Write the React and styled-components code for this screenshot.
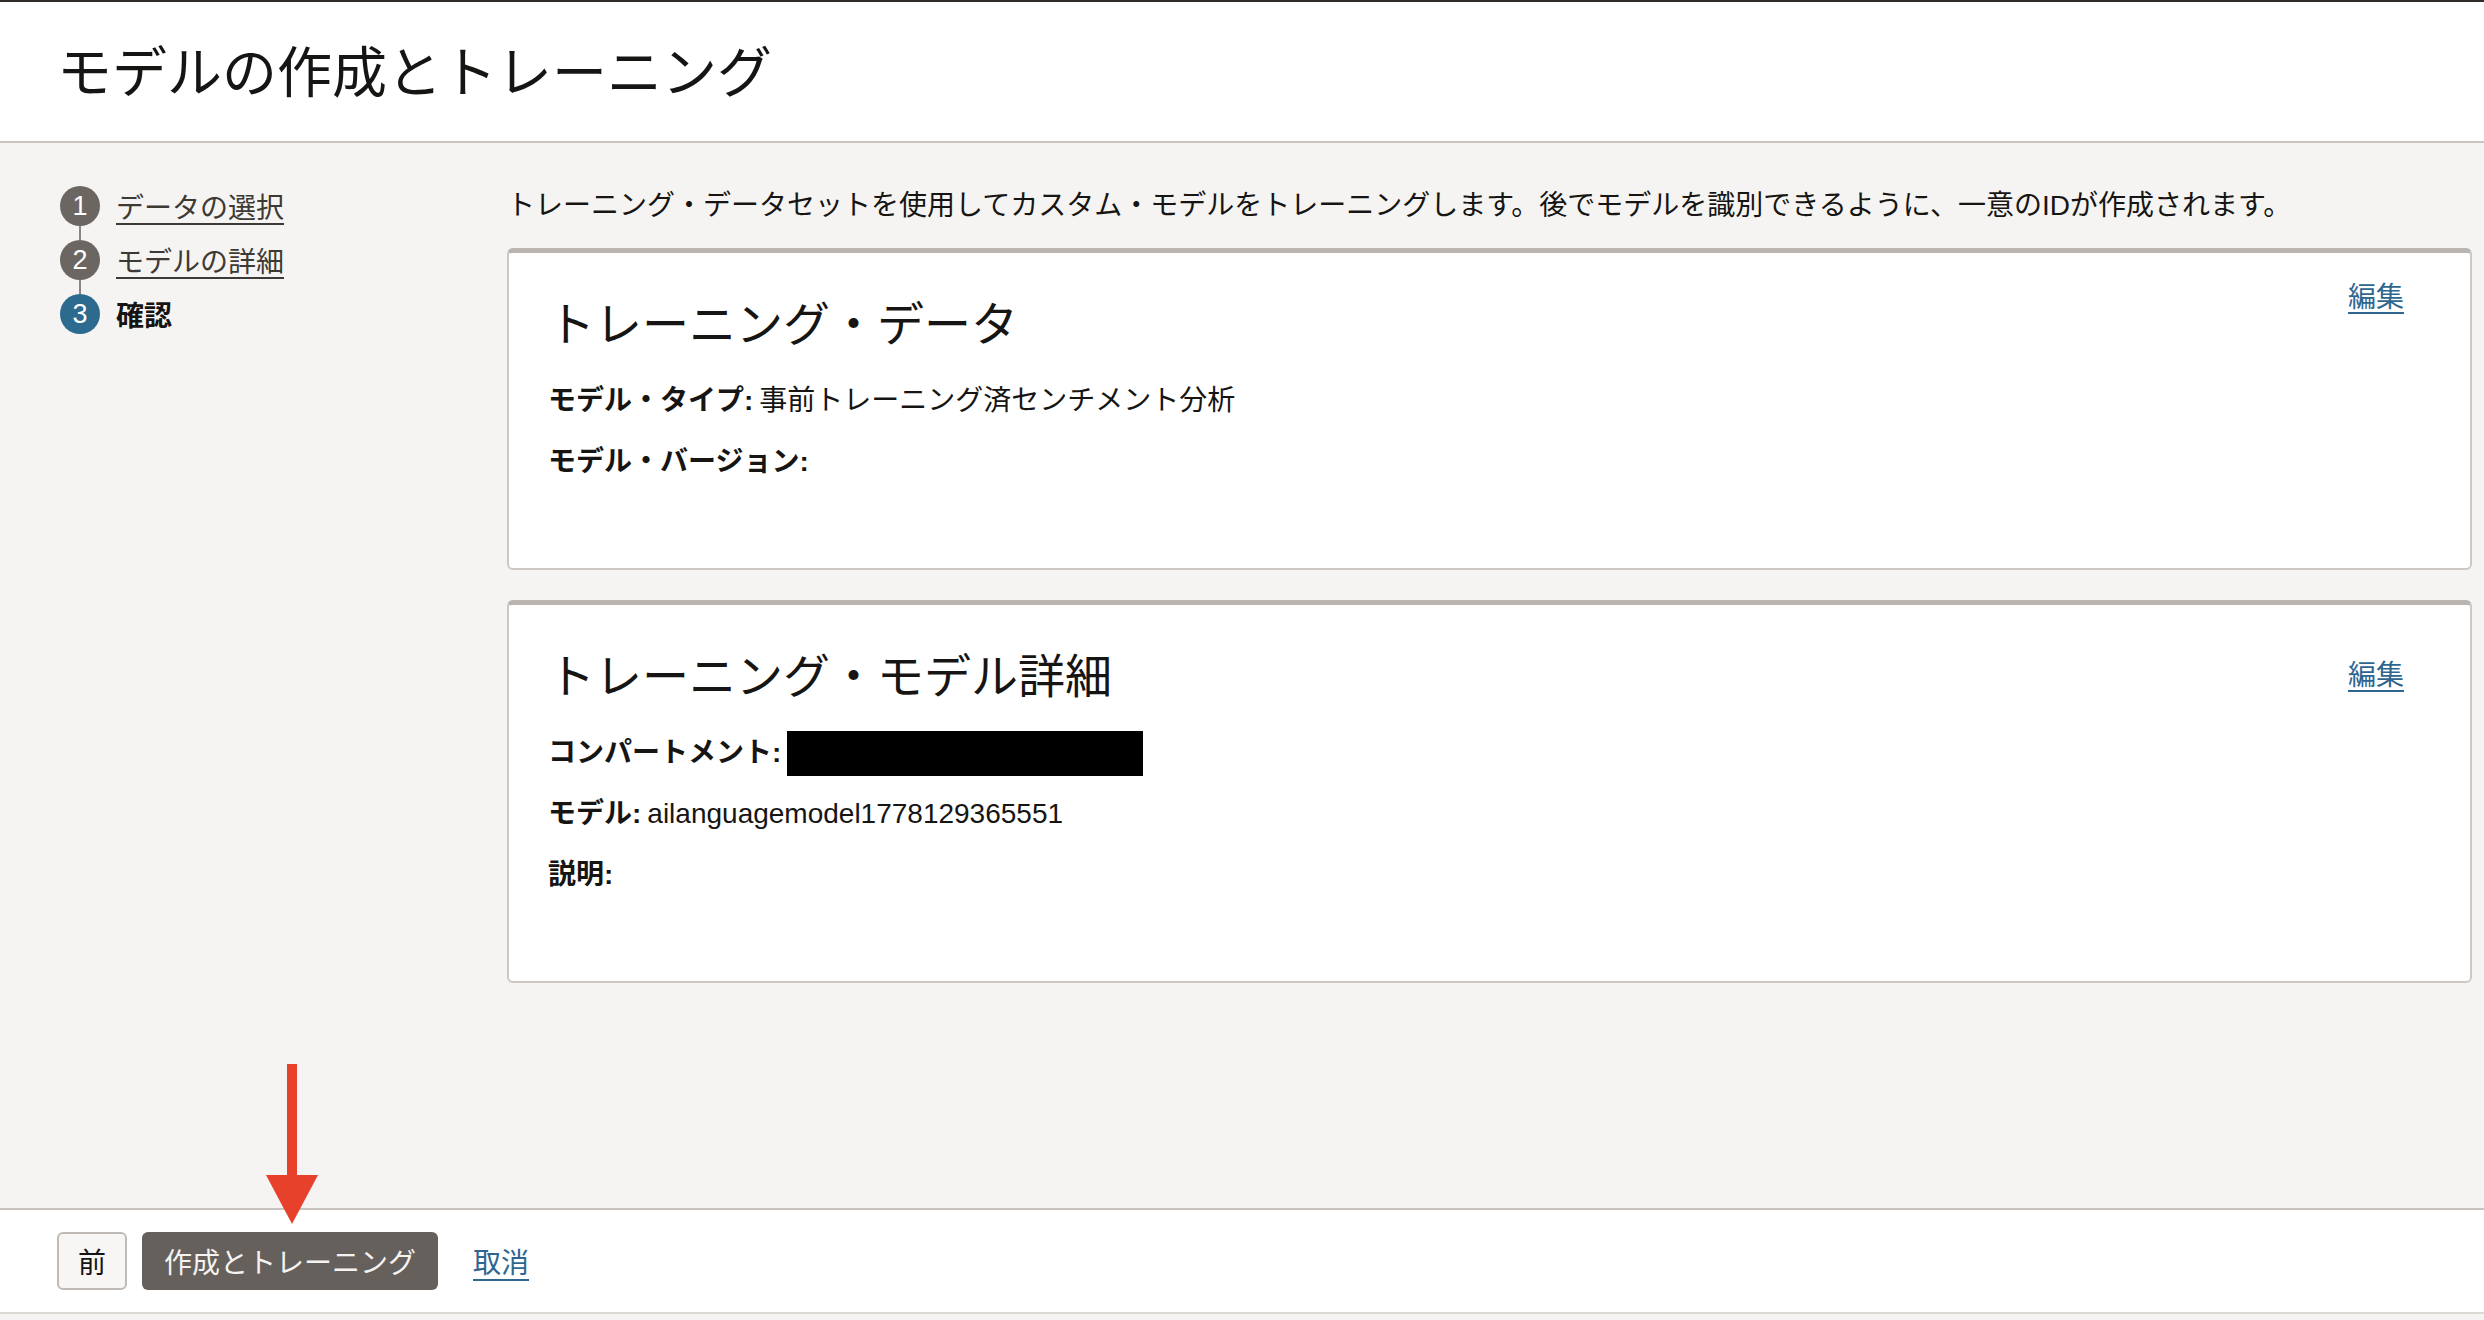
import React from "react";
import styled, { createGlobalStyle } from "styled-components";

const GlobalStyle = createGlobalStyle`
  html, body {
    margin: 0;
    padding: 0;
    background: #f5f4f2;
  }
  body {
    font-family: "Liberation Sans", "Noto Sans CJK JP", sans-serif;
    color: #161513;
  }
  * {
    box-sizing: border-box;
  }
`;

const Page = styled.div`
  position: relative;
  display: flex;
  flex-direction: column;
  min-height: 100vh;
  padding-bottom: 6px;
  background: #f5f4f2;
`;

const Header = styled.header`
  display: flex;
  align-items: center;
  height: 143px;
  padding: 0 0 7px 57px;
  background: #fff;
  border-top: 2px solid #312d2a;
  border-bottom: 2px solid #c9c4bf;
`;

const Title = styled.h1`
  margin: 0;
  font-family: "Noto Sans CJK JP", sans-serif;
  font-size: 55px;
  font-weight: 400;
  line-height: 66px;
  color: #161513;
`;

const Main = styled.main`
  flex: 1;
  display: flex;
`;

const Sidebar = styled.nav`
  width: 507px;
  flex-shrink: 0;
  padding: 43px 0 0 60px;
`;

const StepList = styled.ol`
  margin: 0;
  padding: 0;
  list-style: none;
  display: flex;
  flex-direction: column;
`;

const StepItem = styled.li`
  display: flex;
  align-items: center;
  gap: 16px;
  height: 40px;
`;

const Connector = styled.div`
  width: 2px;
  height: 14px;
  margin-left: 19px;
  background: #8b8681;
`;

const StepCircle = styled.span`
  width: 40px;
  height: 40px;
  border-radius: 50%;
  display: flex;
  align-items: center;
  justify-content: center;
  background: ${(p) => (p.$current ? "#2c6a8e" : "#6b6662")};
  color: #fff;
  font-family: "Liberation Sans", sans-serif;
  font-size: 27px;
`;

const StepLabel = styled.span`
  font-family: "Noto Sans CJK JP", sans-serif;
  font-size: 28px;
  line-height: 40px;
  color: ${(p) => (p.$current ? "#161513" : "#3d3935")};
  font-weight: ${(p) => (p.$current ? 700 : 400)};
  text-decoration: ${(p) => (p.$current ? "none" : "underline")};
  text-decoration-thickness: 2px;
  text-underline-offset: 5px;
`;

const Content = styled.section`
  flex: 1;
  display: flex;
  flex-direction: column;
  gap: 30px;
  padding: 43px 12px 0 0;
`;

const Intro = styled.p`
  margin: 0 0 -8px;
  font-family: "Liberation Sans", "Noto Sans CJK JP", sans-serif;
  font-size: 28px;
  line-height: 40px;
  color: #161513;
`;

const Card = styled.div`
  background: #fff;
  border: 2px solid #cdc8c3;
  border-top: 5px solid #b9b4af;
  border-radius: 6px;
  padding: 40px 66px 86px 39px;
`;

const CardHead = styled.div`
  display: flex;
  justify-content: space-between;
  align-items: ${(p) => p.$align};
`;

const CardTitle = styled.h2`
  margin: 0;
  font-family: "Noto Sans CJK JP", sans-serif;
  font-size: 47px;
  font-weight: 400;
  line-height: 55px;
  color: #161513;
`;

const EditLink = styled.a`
  margin-top: ${(p) => p.$shift || 0}px;
  font-family: "Noto Sans CJK JP", sans-serif;
  font-size: 28px;
  line-height: 40px;
  color: #2f6690;
  text-decoration: underline;
  text-decoration-thickness: 2px;
  text-underline-offset: 5px;
  cursor: pointer;
`;

const FieldList = styled.div`
  display: flex;
  flex-direction: column;
  gap: 21px;
  margin-top: 33px;
`;

const Field = styled.div`
  display: flex;
  align-items: center;
  height: 40px;
  font-size: 28px;
  line-height: 40px;
  color: #161513;
`;

const FieldLabel = styled.span`
  font-family: "Liberation Sans", "Noto Sans CJK JP", sans-serif;
  font-weight: 700;
  margin-right: 6px;
`;

const FieldValue = styled.span`
  font-family: "Liberation Sans", "Noto Sans CJK JP", sans-serif;
  font-size: 28px;
`;

const Redacted = styled.span`
  display: inline-block;
  width: 356px;
  height: 45px;
  background: #000;
`;

const Footer = styled.footer`
  display: flex;
  align-items: center;
  height: 106px;
  padding-left: 57px;
  background: #fff;
  border-top: 2px solid #c8c3be;
  border-bottom: 2px solid #dcd8d4;
`;

const Button = styled.button`
  height: 58px;
  padding: 0 ${(p) => (p.$primary ? 22 : 19)}px;
  margin-right: ${(p) => (p.$primary ? 35 : 15)}px;
  border-radius: 6px;
  border: ${(p) => (p.$primary ? "none" : "2px solid #bfbab5")};
  background: ${(p) => (p.$primary ? "#65605b" : "#f7f6f5")};
  color: ${(p) => (p.$primary ? "#f5f3f1" : "#161513")};
  font-family: "Noto Sans CJK JP", sans-serif;
  font-size: 28px;
  line-height: 40px;
  cursor: pointer;
`;

const CancelLink = styled.a`
  font-family: "Noto Sans CJK JP", sans-serif;
  font-size: 28px;
  color: #2f6690;
  text-decoration: underline;
  text-decoration-thickness: 2px;
  text-underline-offset: 6px;
  cursor: pointer;
`;

const Arrow = styled.svg`
  position: absolute;
  left: 266px;
  top: 1064px;
`;

const steps = [
  { n: 1, label: "データの選択" },
  { n: 2, label: "モデルの詳細" },
  { n: 3, label: "確認", current: true },
];

const App = () => {
  return (
    <Page>
      <GlobalStyle />
      <Header>
        <Title>モデルの作成とトレーニング</Title>
      </Header>
      <Main>
        <Sidebar>
          <StepList>
            {steps.map((s, i) => (
              <React.Fragment key={s.n}>
                {i > 0 && <Connector />}
                <StepItem>
                  <StepCircle $current={s.current}>{s.n}</StepCircle>
                  <StepLabel $current={s.current}>{s.label}</StepLabel>
                </StepItem>
              </React.Fragment>
            ))}
          </StepList>
        </Sidebar>
        <Content>
          <Intro>
            トレーニング・データセットを使用してカスタム・モデルをトレーニングします。後でモデルを識別できるように、一意のIDが作成されます。
          </Intro>
          <Card>
            <CardHead $align="flex-start">
              <CardTitle>トレーニング・データ</CardTitle>
              <EditLink $shift={-18}>編集</EditLink>
            </CardHead>
            <FieldList>
              <Field>
                <FieldLabel>モデル・タイプ:</FieldLabel>
                <FieldValue>事前トレーニング済センチメント分析</FieldValue>
              </Field>
              <Field>
                <FieldLabel>モデル・バージョン:</FieldLabel>
              </Field>
            </FieldList>
          </Card>
          <Card>
            <CardHead $align="center">
              <CardTitle>トレーニング・モデル詳細</CardTitle>
              <EditLink>編集</EditLink>
            </CardHead>
            <FieldList>
              <Field>
                <FieldLabel>コンパートメント:</FieldLabel>
                <Redacted />
              </Field>
              <Field>
                <FieldLabel>モデル:</FieldLabel>
                <FieldValue>ailanguagemodel1778129365551</FieldValue>
              </Field>
              <Field>
                <FieldLabel>説明:</FieldLabel>
              </Field>
            </FieldList>
          </Card>
        </Content>
      </Main>
      <Footer>
        <Button>前</Button>
        <Button $primary>作成とトレーニング</Button>
        <CancelLink>取消</CancelLink>
      </Footer>
      {/* 注釈の矢印 */}
      <Arrow width="52" height="161" viewBox="0 0 52 161">
        <rect x="21" y="0" width="10" height="113" fill="#e8412b" />
        <polygon points="0,111 52,111 26,160" fill="#e8412b" />
      </Arrow>
    </Page>
  );
};

export default App;
